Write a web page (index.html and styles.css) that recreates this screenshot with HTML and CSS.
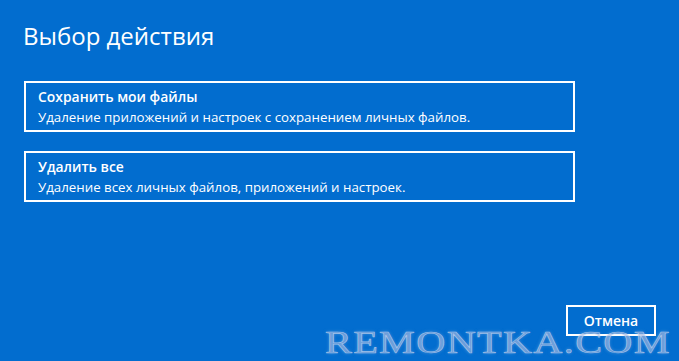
FILE: index.html
```html
<!DOCTYPE html>
<html lang="ru">
<head>
<meta charset="utf-8">
<title>Выбор действия</title>
<link rel="stylesheet" href="styles.css">
</head>
<body>
<div class="screen">
  <h1 class="title">Выбор действия</h1>
  <div class="options">
    <div class="option">
      <div class="option-name">Сохранить мои файлы</div>
      <div class="option-desc">Удаление приложений и настроек с сохранением личных файлов.</div>
    </div>
    <div class="option">
      <div class="option-name">Удалить все</div>
      <div class="option-desc">Удаление всех личных файлов, приложений и настроек.</div>
    </div>
  </div>
  <div class="footer">
    <button class="cancel">Отмена</button>
  </div>
  <div class="watermark">REMONTKA.COM</div>
</div>
</body>
</html>
```
FILE: styles.css
```css
html, body {
  margin: 0;
  padding: 0;
}
body {
  background: #026dcf;
  font-family: "Open Sans", "Noto Sans", sans-serif;
  color: #ffffff;
}
.screen {
  position: relative;
  box-sizing: border-box;
  height: 361px;
  padding: 20px 23px 25px 24px;
  display: flex;
  flex-direction: column;
  overflow: hidden;
}
.title {
  margin: 0 0 0 -1px;
  font-size: 24px;
  line-height: 32px;
  font-weight: 400;
}
.options {
  margin-top: 29px;
  width: 551px;
  display: flex;
  flex-direction: column;
  gap: 19px;
}
.option {
  border: 2px solid #ffffff;
  padding: 4px 12px 3px 12px;
}
.option-name {
  font-size: 13.9px;
  line-height: 20px;
  font-weight: 600;
}
.option-desc {
  font-size: 13.3px;
  line-height: 20px;
}
.footer {
  margin-top: auto;
  display: flex;
  justify-content: flex-end;
}
.cancel {
  width: 90px;
  height: 31px;
  background: transparent;
  border: 2px solid #ffffff;
  color: #ffffff;
  font-family: "Open Sans", "Noto Sans", sans-serif;
  font-size: 14px;
  font-weight: 600;
  padding: 0;
}
.watermark {
  position: absolute;
  left: 325px;
  top: 332px;
  font-family: "Liberation Serif", serif;
  font-size: 31px;
  line-height: 22px;
  letter-spacing: 1px;
  color: rgba(150, 175, 220, 0.5);
  -webkit-text-stroke: 0.6px rgba(205, 218, 242, 0.7);
  text-shadow: 0 0 3px rgba(190, 208, 238, 0.5);
  transform: scaleX(1.3);
  transform-origin: left top;
  white-space: nowrap;
}
```
